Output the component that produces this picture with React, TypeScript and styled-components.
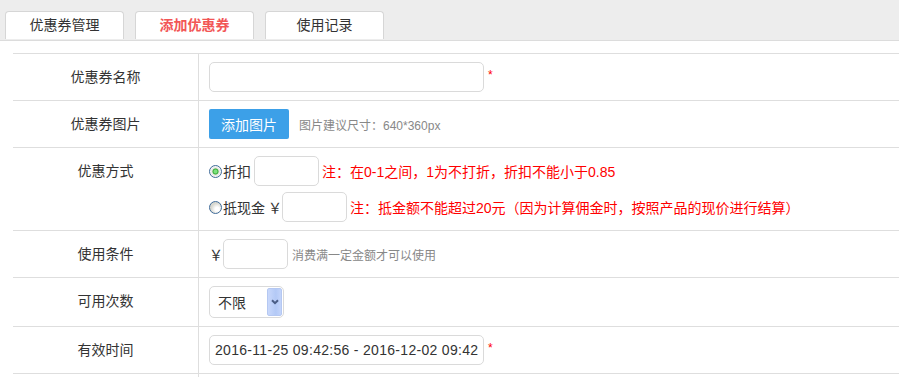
import styled, { createGlobalStyle } from "styled-components";

const GlobalStyle = createGlobalStyle`
    body {
        margin: 0;
        background: #fff;
        color: #333;
        font-family: "Liberation Sans", "Noto Sans CJK SC", sans-serif;
        font-size: 14px;
    }
`;

const TabBar = styled.div`
    display: flex;
    align-items: flex-end;
    gap: 11px;
    height: 40px;
    box-sizing: content-box;
    padding-left: 5px;
    background: #ededed;
    border-bottom: 1px solid #dcdcdc;
`;

const Tab = styled.div<{ $active?: boolean }>`
    width: 119px;
    height: 28px;
    box-sizing: border-box;
    margin-bottom: 1px;
    background: #fff;
    border: 1px solid #d6d6d6;
    border-bottom: none;
    border-radius: 4px 4px 0 0;
    text-align: center;
    line-height: 27px;
    font-size: 14px;
    color: ${props => (props.$active ? "#f25656" : "#333")};
    font-weight: ${props => (props.$active ? 700 : 400)};
`;

const Form = styled.div`
    margin: 12px 0 0 13px;
    border-top: 1px solid #dedede;
`;

const Row = styled.div`
    display: flex;
    border-bottom: 1px solid #dedede;
`;

const LabelCell = styled.div`
    width: 186px;
    flex-shrink: 0;
    box-sizing: border-box;
    padding: 8px 0;
    border-right: 1px solid #dedede;
    text-align: center;
    line-height: 30px;
    font-size: 14px;
    color: #333;
`;

const FieldCell = styled.div`
    flex: 1;
    display: flex;
    flex-direction: column;
    gap: 6px;
    padding: 8px 10px;
`;

const Line = styled.div`
    display: flex;
    align-items: center;
    height: 30px;
`;

const TextInput = styled.input<{ $width: number; $spacing?: number }>`
    width: ${props => props.$width}px;
    height: 30px;
    box-sizing: border-box;
    padding: 0 5px;
    border: 1px solid #dadada;
    border-radius: 5px;
    outline: none;
    font-family: "Liberation Sans", "Noto Sans CJK SC", sans-serif;
    font-size: 14px;
    letter-spacing: ${props => props.$spacing ?? 0}px;
    color: #333;
    background: #fff;
`;

const Required = styled.span`
    margin-left: 4px;
    color: #f00;
    font-size: 12px;
    align-self: flex-start;
    margin-top: 6px;
`;

const UploadButton = styled.button`
    width: 80px;
    height: 30px;
    border: none;
    border-radius: 2px;
    background: #3ca0e8;
    color: #fff;
    font-family: "Noto Sans CJK SC", sans-serif;
    font-size: 14px;
    cursor: pointer;
`;

const Hint = styled.span<{ $gap?: number }>`
    margin-left: ${props => props.$gap ?? 10}px;
    color: #888;
    font-size: 12px;
`;

const Note = styled.span`
    margin-left: 3px;
    color: #f00;
    font-size: 14px;
    white-space: nowrap;
`;

const RadioOption = styled.label`
    display: flex;
    align-items: center;
    gap: 1px;
    margin-right: 3px;
    font-size: 14px;
    color: #333;
`;

const Radio = styled.span<{ $checked?: boolean }>`
    width: 13px;
    height: 13px;
    box-sizing: border-box;
    border-radius: 50%;
    border: 1px solid #3f6b99;
    flex-shrink: 0;
    background: ${props =>
        props.$checked
            ? "radial-gradient(circle, #7de07d 0 1.5px, #2da82d 2.6px, #e4e4de 3.4px, #fff 6px)"
            : "radial-gradient(circle at 65% 65%, #fff 0 2px, #d8d8d0 6px)"};
`;

const Currency = styled.span`
    font-size: 14px;
    color: #333;
`;

const SelectBox = styled.div`
    display: flex;
    width: 75px;
    height: 32px;
    box-sizing: border-box;
    padding: 1px;
    border: 1px solid #dadada;
    border-radius: 5px;
    background: #fff;
`;

const Select = styled.select`
    flex: 1;
    min-width: 0;
    appearance: none;
    border: none;
    outline: none;
    background: transparent;
    padding: 0 0 0 7px;
    font-family: "Noto Sans CJK SC", sans-serif;
    font-size: 14px;
    color: #333;
`;

const SelectArrow = styled.span`
    width: 15px;
    display: flex;
    align-items: center;
    justify-content: center;
    border-radius: 2px;
    background: linear-gradient(90deg, #c9d8fb, #b3c9f6 60%, #c3d4fa);
    border: 1px solid #b5c8f2;
    box-sizing: border-box;
`;

const TextArea = styled.textarea`
    width: 420px;
    height: 80px;
    box-sizing: border-box;
    border: 1px solid #dadada;
    border-radius: 5px;
    resize: none;
`;

function App() {
    return (
        <>
            <GlobalStyle />
            <TabBar>
                <Tab>优惠券管理</Tab>
                <Tab $active>添加优惠券</Tab>
                <Tab>使用记录</Tab>
            </TabBar>

            <Form>
                <Row>
                    <LabelCell>优惠券名称</LabelCell>
                    <FieldCell>
                        <Line>
                            <TextInput $width={275} type="text" />
                            <Required>*</Required>
                        </Line>
                    </FieldCell>
                </Row>

                <Row>
                    <LabelCell>优惠券图片</LabelCell>
                    <FieldCell>
                        <Line>
                            <UploadButton type="button">添加图片</UploadButton>
                            <Hint>图片建议尺寸：640*360px</Hint>
                        </Line>
                    </FieldCell>
                </Row>

                <Row>
                    <LabelCell>优惠方式</LabelCell>
                    <FieldCell>
                        <Line>
                            <RadioOption>
                                <Radio $checked />
                                折扣
                            </RadioOption>
                            <TextInput $width={65} type="text" />
                            <Note>注：在0-1之间，1为不打折，折扣不能小于0.85</Note>
                        </Line>
                        <Line>
                            <RadioOption>
                                <Radio />
                                抵现金
                            </RadioOption>
                            <Currency>￥</Currency>
                            <TextInput $width={65} type="text" />
                            <Note>注：抵金额不能超过20元（因为计算佣金时，按照产品的现价进行结算）</Note>
                        </Line>
                    </FieldCell>
                </Row>

                <Row>
                    <LabelCell>使用条件</LabelCell>
                    <FieldCell>
                        <Line>
                            <Currency>￥</Currency>
                            <TextInput $width={65} type="text" />
                            <Hint $gap={4}>消费满一定金额才可以使用</Hint>
                        </Line>
                    </FieldCell>
                </Row>

                <Row>
                    <LabelCell>可用次数</LabelCell>
                    <FieldCell>
                        <SelectBox>
                            <Select defaultValue="0">
                                <option value="0">不限</option>
                                <option value="1">1次</option>
                            </Select>
                            <SelectArrow>
                                <svg width="8" height="6" viewBox="0 0 8 6">
                                    <path d="M1 1.2 L4 4.2 L7 1.2" fill="none" stroke="#4a5d85" strokeWidth="2" />
                                </svg>
                            </SelectArrow>
                        </SelectBox>
                    </FieldCell>
                </Row>

                <Row>
                    <LabelCell>有效时间</LabelCell>
                    <FieldCell>
                        <Line>
                            <TextInput
                                $width={275}
                                $spacing={0.3}
                                type="text"
                                readOnly
                                value="2016-11-25 09:42:56 - 2016-12-02 09:42"
                            />
                            <Required>*</Required>
                        </Line>
                    </FieldCell>
                </Row>

                <Row>
                    <LabelCell />
                    <FieldCell>
                        <TextArea />
                    </FieldCell>
                </Row>
            </Form>
        </>
    );
}

export default App;
